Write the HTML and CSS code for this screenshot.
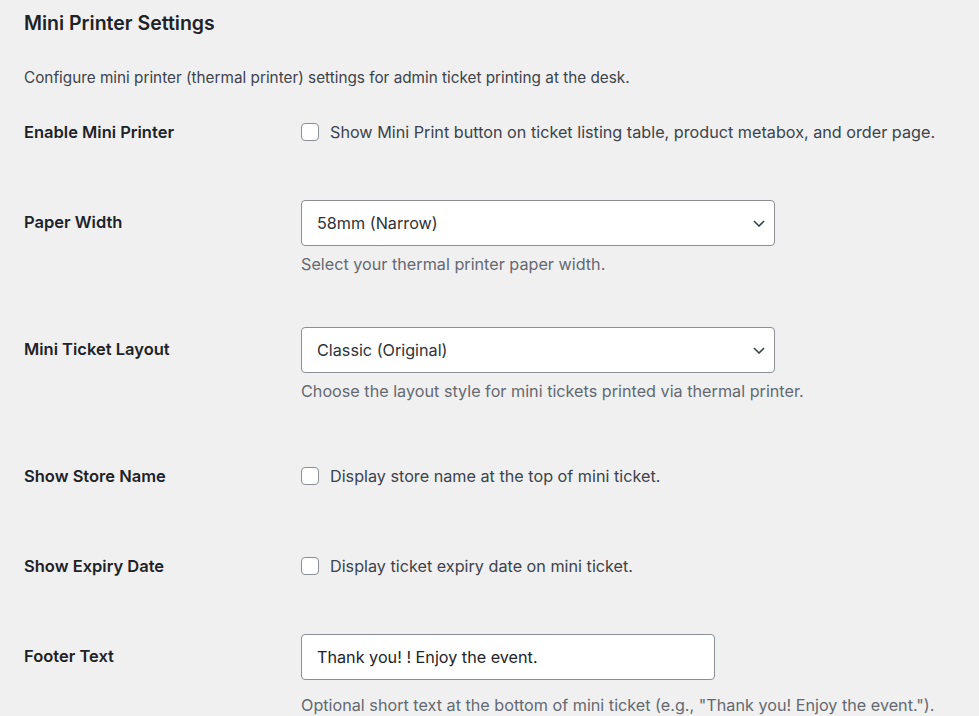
FILE: index.html
```html
<!DOCTYPE html>
<html lang="en">
<head>
    <meta charset="UTF-8">
    <meta name="viewport" content="width=device-width, initial-scale=1.0">
    <title>Mini Printer Settings</title>
    <link rel="stylesheet" href="styles.css">
</head>
<body>
    <div class="wrap">
        <h2 class="section-title">Mini Printer Settings</h2>
        <p class="intro">Configure mini printer (thermal printer) settings for admin ticket printing at the desk.</p>

        <table class="form-table">
            <tr class="row-check">
                <th>Enable Mini Printer</th>
                <td>
                    <label class="check">
                        <input type="checkbox">
                        <span>Show Mini Print button on ticket listing table, product metabox, and order page.</span>
                    </label>
                </td>
            </tr>
            <tr>
                <th>Paper Width</th>
                <td>
                    <div class="select-wrap">
                        <select class="field">
                            <option>58mm (Narrow)</option>
                            <option>80mm (Wide)</option>
                        </select>
                        <svg class="chevron" width="12" height="7" viewBox="0 0 12 7"><polyline points="1,1 6,6 11,1" fill="none" stroke="#3c434a" stroke-width="1.6"/></svg>
                    </div>
                    <p class="description">Select your thermal printer paper width.</p>
                </td>
            </tr>
            <tr>
                <th>Mini Ticket Layout</th>
                <td>
                    <div class="select-wrap">
                        <select class="field">
                            <option>Classic (Original)</option>
                            <option>Compact</option>
                        </select>
                        <svg class="chevron" width="12" height="7" viewBox="0 0 12 7"><polyline points="1,1 6,6 11,1" fill="none" stroke="#3c434a" stroke-width="1.6"/></svg>
                    </div>
                    <p class="description">Choose the layout style for mini tickets printed via thermal printer.</p>
                </td>
            </tr>
            <tr class="row-check">
                <th>Show Store Name</th>
                <td>
                    <label class="check">
                        <input type="checkbox">
                        <span>Display store name at the top of mini ticket.</span>
                    </label>
                </td>
            </tr>
            <tr class="row-check">
                <th>Show Expiry Date</th>
                <td>
                    <label class="check">
                        <input type="checkbox">
                        <span>Display ticket expiry date on mini ticket.</span>
                    </label>
                </td>
            </tr>
            <tr>
                <th>Footer Text</th>
                <td>
                    <input type="text" class="field text-field" value="Thank you! ! Enjoy the event.">
                    <p class="description description-wide">Optional short text at the bottom of mini ticket (e.g., "Thank you! Enjoy the event.").</p>
                </td>
            </tr>
        </table>
    </div>
</body>
</html>
```

FILE: styles.css
```css
*{margin: 0; padding: 0; box-sizing: border-box;}
body{
    background: #f0f0f1;
    color: #3c434a;
    font-family: Inter, "Noto Sans", "Liberation Sans", sans-serif;
    font-size: 16.2px;
}
.wrap{
    padding: 0 24px;
}
.section-title{
    font-size: 19.5px;
    font-weight: 600;
    line-height: 24px;
    margin-top: 11px;
    color: #1d2327;
}
.intro{
    font-size: 15.3px;
    line-height: 18px;
    margin-top: 34px;
}
.form-table{
    border-collapse: collapse;
    border-spacing: 0;
}
.form-table th{
    width: 277px;
    padding: 35px 0 0 0;
    line-height: 20px;
    font-size: 16.5px;
    text-align: left;
    vertical-align: top;
    font-weight: 600;
    color: #1d2327;
}
.form-table td{
    padding: 23px 0;
    vertical-align: top;
}
.check{
    display: flex;
    align-items: center;
    gap: 11px;
    height: 44px;
    color: #3c434a;
}
.check input{
    appearance: none;
    width: 18px;
    height: 18px;
    background: #fff;
    border: 1px solid #8c8f94;
    border-radius: 4px;
}
.select-wrap{
    position: relative;
    width: 474px;
}
.field{
    display: block;
    width: 474px;
    height: 46px;
    padding: 0 15px;
    background: #fff;
    border: 1px solid #8c8f94;
    border-radius: 4px;
    font-family: inherit;
    font-size: 16.2px;
    color: #2c3338;
    appearance: none;
}
.chevron{
    position: absolute;
    right: 10px;
    top: 20px;
}
.text-field{
    width: 414px;
    color: #1d2327;
}
.description{
    margin: 8px 0 7px;
    line-height: 20px;
    color: #646970;
}
.description-wide{
    margin-top: 15px;
}
```
